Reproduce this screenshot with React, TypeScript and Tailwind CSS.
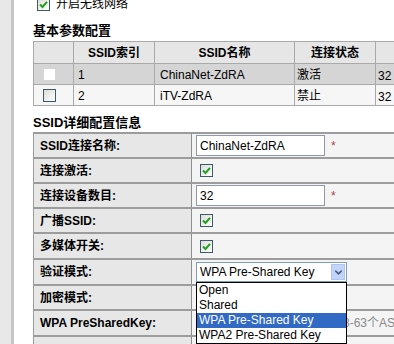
import { ChevronDown } from "lucide-react";

const font = "font-['Liberation_Sans','Noto_Sans_CJK_SC',sans-serif]";

function Check({ checked = false, plain = false }: { checked?: boolean; plain?: boolean }) {
  if (plain) return <span className="block w-[11px] h-[11px] bg-white" />;
  return (
    <span className="flex items-center justify-center w-[13px] h-[13px] border border-[#3d5a6c] bg-[linear-gradient(135deg,#dcdcd7,#ffffff)]">
      {checked && (
        <svg width="9" height="9" viewBox="0 0 9 9">
          <path d="M1 4.5 L3.5 7 L8 1.8" fill="none" stroke="#21a121" strokeWidth="2" />
        </svg>
      )}
    </span>
  );
}

const ssids = [
  { idx: "1", name: "ChinaNet-ZdRA", state: "激活", count: "32", on: true },
  { idx: "2", name: "iTV-ZdRA", state: "禁止", count: "32", on: false },
];

function Row({ label, h, children }: { label: string; h: string; children?: React.ReactNode }) {
  return (
    <div className={`flex border-b-2 border-[#9c9c9c] ${h}`}>
      <div className="w-[158px] shrink-0 bg-[#e7e7e7] border-r border-[#8e8e8e] flex items-center pl-[6px] font-bold text-[12px]">
        {label}
      </div>
      <div className="flex-1 bg-[#f4f4f4] flex items-center relative">{children}</div>
    </div>
  );
}

function TextInput({ value }: { value: string }) {
  return (
    <div className="ml-[4px] w-[129px] h-[21px] border border-[#8f9aa5] bg-white flex items-center pl-[3px] text-[12px]">
      {value}
    </div>
  );
}

const Star = () => <span className="ml-[6px] text-[12px] text-[#b04040]">*</span>;

export default function App() {
  return (
    <div className={`flex w-[394px] h-[344px] overflow-hidden bg-white text-black ${font}`}>
      <div className="w-[14px] shrink-0 bg-[#e8e8e8] border-r-[3px] border-[#c6c6c6]" />
      <div className="pl-[19px] flex-1 min-w-0">
        <div className="-mt-[2px] h-[12px] flex items-center gap-[6px] pl-[4px] text-[12px]">
          <Check checked />
          <span className="leading-[13px] pt-[1px]">开启无线网络</span>
        </div>

        <div className="mt-[13px] h-[16px] leading-[16px] text-[13px] font-bold">基本参数配置</div>

        <div className="mt-[2px] w-[420px] border-t border-l border-[#a9a9a9] text-[12px]">
          <div className="grid grid-cols-[40px_81px_140px_81px_1fr] h-[22px] border-b border-[#a9a9a9] bg-[#e6e6e6] font-bold">
            <div className="border-r border-[#a9a9a9]" />
            <div className="border-r border-[#a9a9a9] flex items-center justify-center">SSID索引</div>
            <div className="border-r border-[#a9a9a9] flex items-center justify-center">SSID名称</div>
            <div className="border-r border-[#a9a9a9] flex items-center justify-center">连接状态</div>
            <div />
          </div>
          {ssids.map((s) => (
            <div
              key={s.idx}
              className={`grid grid-cols-[40px_81px_140px_81px_1fr] h-[21px] border-b border-[#a9a9a9] ${
                s.on ? "bg-[#d5d5d5]" : "bg-[#f6f6f6]"
              }`}
            >
              <div className={`border-r border-[#a9a9a9] flex items-center ${s.on ? "pl-[10px]" : "pl-[9px]"}`}>
                <Check plain={s.on} />
              </div>
              <div className="border-r border-[#a9a9a9] flex items-center pl-[4px]">{s.idx}</div>
              <div className="border-r border-[#a9a9a9] flex items-center pl-[5px]">{s.name}</div>
              <div className="border-r border-[#a9a9a9] flex items-center pl-[2px]">{s.state}</div>
              <div className="flex items-center pl-[2px] pt-[3px]">{s.count}</div>
            </div>
          ))}
        </div>

        <div className="mt-[9px] h-[16px] leading-[16px] text-[13px] font-bold">SSID详细配置信息</div>

        <div className="mt-[1px] w-[380px] border-t-2 border-l border-[#9c9c9c]">
          <Row label="SSID连接名称:" h="h-[25px]">
            <TextInput value="ChinaNet-ZdRA" />
            <Star />
          </Row>
          <Row label="连接激活:" h="h-[25px]">
            <span className="ml-[8px]"><Check checked /></span>
          </Row>
          <Row label="连接设备数目:" h="h-[25px]">
            <TextInput value="32" />
            <Star />
          </Row>
          <Row label="广播SSID:" h="h-[25px]">
            <span className="ml-[8px]"><Check checked /></span>
          </Row>
          <Row label="多媒体开关:" h="h-[26px]">
            <span className="ml-[8px]"><Check checked /></span>
          </Row>
          <Row label="验证模式:" h="h-[26px]">
            <div className="relative ml-[4px] w-[151px]">
              <div className="h-[20px] border border-[#7f9db9] bg-white flex items-center pl-[3px] text-[12px]">
                <span className="flex-1">WPA Pre-Shared Key</span>
                <span className="mr-[1px] w-[14px] h-[16px] bg-[#c3d4fc] border border-[#b0c4ef] flex items-center justify-center">
                  <ChevronDown size={11} strokeWidth={3.5} className="text-[#4d6185]" />
                </span>
              </div>
              <div className="absolute left-0 top-full z-10 w-[151px] border border-black bg-white text-[12px]">
                {["Open", "Shared", "WPA Pre-Shared Key", "WPA2 Pre-Shared Key"].map((o, i) => (
                  <div
                    key={o}
                    className={`h-[15px] leading-[15px] pl-[2px] ${i === 2 ? "bg-[#316ac5] text-white" : ""}`}
                  >
                    {o}
                  </div>
                ))}
              </div>
            </div>
          </Row>
          <Row label="加密模式:" h="h-[25px]" />
          <Row label="WPA PreSharedKey:" h="h-[26px]">
            <TextInput value="" />
            <span className="ml-[14px] whitespace-nowrap text-[12px] text-[#8a8a8a]">(8-63个ASCII码字符)</span>
          </Row>
          <Row label="" h="h-[26px]" />
        </div>
      </div>
    </div>
  );
}
